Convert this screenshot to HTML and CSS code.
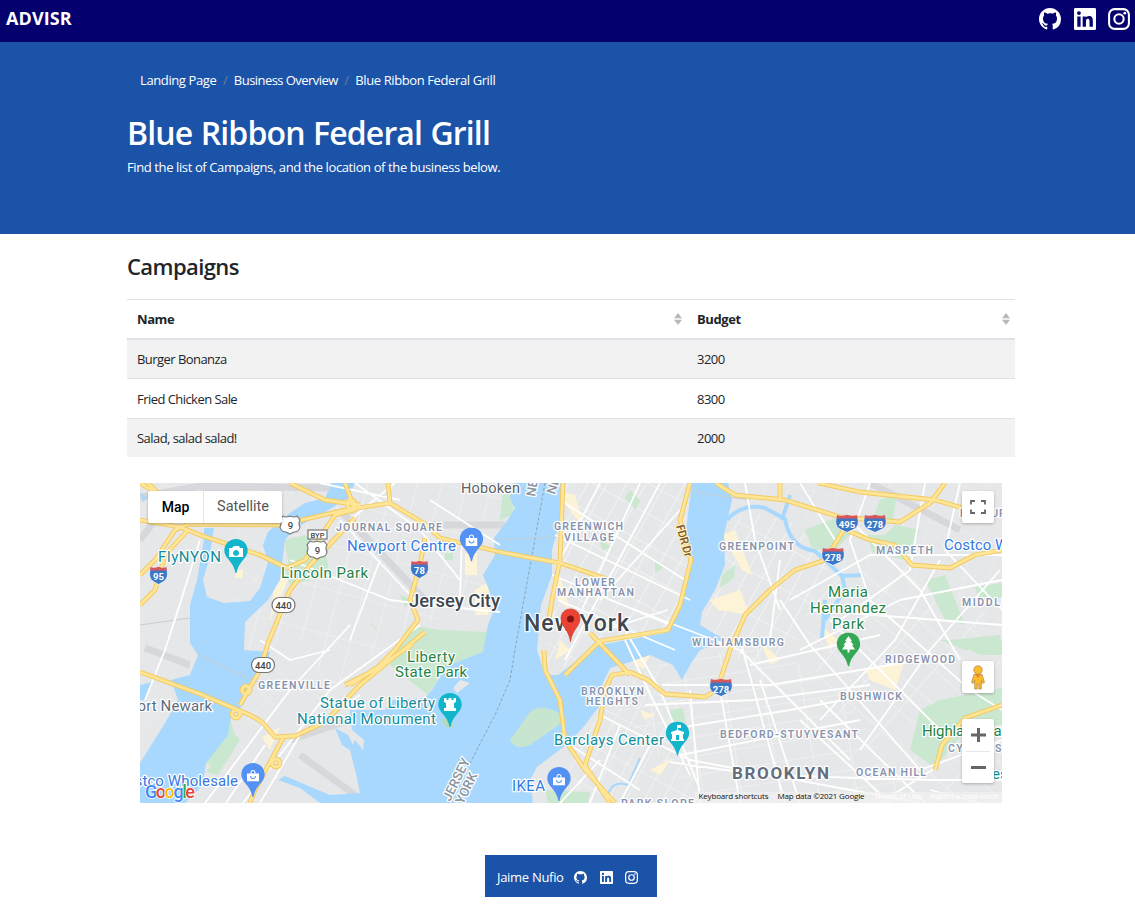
FILE: index.html
```html
<!DOCTYPE html>
<html lang="en">
<head>
<meta charset="utf-8">
<title>ADVISR</title>
<link rel="stylesheet" href="styles.css">
</head>
<body>
<svg class="defs" width="0" height="0" aria-hidden="true">
  <symbol id="github" viewBox="0 0 16 16"><path d="M8 0C3.58 0 0 3.58 0 8c0 3.54 2.29 6.53 5.47 7.59.4.07.55-.17.55-.38 0-.19-.01-.82-.01-1.49-2.01.37-2.53-.49-2.69-.94-.09-.23-.48-.94-.82-1.13-.28-.15-.68-.52-.01-.53.63-.01 1.08.58 1.23.82.72 1.21 1.87.87 2.33.66.07-.52.28-.87.51-1.07-1.78-.2-3.64-.89-3.64-3.95 0-.87.31-1.59.82-2.15-.08-.2-.36-1.02.08-2.12 0 0 .67-.21 2.2.82A7.7 7.7 0 0 1 8 3.87c.68 0 1.36.09 2 .27 1.53-1.04 2.2-.82 2.2-.82.44 1.1.16 1.92.08 2.12.51.56.82 1.27.82 2.15 0 3.07-1.87 3.75-3.65 3.95.29.25.54.73.54 1.48 0 1.07-.01 1.93-.01 2.2 0 .21.15.46.55.38A8.01 8.01 0 0 0 16 8c0-4.42-3.58-8-8-8z"/></symbol>
  <symbol id="linkedin" viewBox="0 0 16 16"><path fill-rule="evenodd" d="M1 0h14a1 1 0 0 1 1 1v14a1 1 0 0 1-1 1H1a1 1 0 0 1-1-1V1a1 1 0 0 1 1-1zm1.400 6.100v7.500h2.400V6.100zM3.600 2.300a1.400 1.400 0 1 0 0 2.800 1.400 1.400 0 0 0 0-2.800zM6.300 6.100v7.500h2.400V9.800c0-1 .3-1.900 1.400-1.900s1.200 1 1.200 2v3.700h2.400V9.400c0-2-.5-3.500-2.900-3.500-1.100 0-1.900.6-2.200 1.200V6.100z"/></symbol>
  <symbol id="instagram" viewBox="0 0 16 16"><rect x=".8" y=".8" width="14.400" height="14.400" rx="4" fill="none" stroke="currentColor" stroke-width="1.500"/><circle cx="8" cy="8" r="3.400" fill="none" stroke="currentColor" stroke-width="1.500"/><circle cx="12.200" cy="3.800" r="1"/></symbol>
  <symbol id="sort" viewBox="0 0 8 12"><path d="M0 5.200 4 0l4 5.200zM0 6.800h8L4 12z"/></symbol>
</svg>

<header class="topbar">
  <a class="brand">ADVISR</a>
  <nav class="social">
    <svg><use href="#github"/></svg>
    <svg><use href="#linkedin"/></svg>
    <svg><use href="#instagram"/></svg>
  </nav>
</header>

<section class="hero">
  <div class="container">
    <nav class="breadcrumb"><a>Landing Page</a><i>/</i><a class="tight">Business Overview</a><i>/</i><span>Blue Ribbon Federal Grill</span></nav>
    <h1>Blue Ribbon Federal Grill</h1>
    <p>Find the list of Campaigns, and the location of the business below.</p>
  </div>
</section>

<main class="container">
  <h2>Campaigns</h2>
  <table class="campaigns">
    <thead><tr>
      <th class="name"><div>Name<svg><use href="#sort"/></svg></div></th>
      <th><div>Budget<svg><use href="#sort"/></svg></div></th>
    </tr></thead>
    <tbody>
      <tr><td>Burger Bonanza</td><td>3200</td></tr>
      <tr><td>Fried Chicken Sale</td><td>8300</td></tr>
      <tr class="last"><td>Salad, salad salad!</td><td>2000</td></tr>
    </tbody>
  </table>

  <div class="map">
    <svg class="tiles" viewBox="140 483 862 320">
      <defs>
        <pattern id="g1" width="17" height="27" patternUnits="userSpaceOnUse" patternTransform="rotate(29)"><path d="M0 0H17M0 0V27" class="street"/></pattern>
        <pattern id="g2" width="16" height="38" patternUnits="userSpaceOnUse" patternTransform="rotate(28)"><path d="M0 0H16M0 0V38" class="street"/></pattern>
        <pattern id="g3" width="38" height="19" patternUnits="userSpaceOnUse" patternTransform="rotate(-9)"><path d="M0 0H38M0 0V19" class="street"/></pattern>
        <pattern id="g4" width="44" height="27" patternUnits="userSpaceOnUse" patternTransform="rotate(41)"><path d="M0 0H44M0 0V27" class="street"/></pattern>
        <pattern id="g5" width="24" height="44" patternUnits="userSpaceOnUse" patternTransform="rotate(15)"><path d="M0 0H24M0 0V44" class="street"/></pattern>
        <symbol id="pin" viewBox="0 0 24 34" preserveAspectRatio="none"><path d="M12 0C5.400 0 .3 5 .3 11.500c0 8 9.200 10.500 11.200 22.500h1c2-12 11.200-14.500 11.200-22.500C23.700 5 18.600 0 12 0z"/></symbol>
        <symbol id="bag" viewBox="0 0 12 12"><path fill="#fff" fill-rule="evenodd" d="M0 4h3.500V3a2.500 2.500 0 0 1 5 0v1H12v8H0zm4.600 0h2.800V3a1.400 1.400 0 0 0-2.800 0zM3 6.500a3 3 0 0 0 6 0H8a2 2 0 0 1-4 0z"/></symbol>
        <symbol id="interstate" viewBox="0 0 24 19" preserveAspectRatio="none"><path d="M2 1.500Q6 3 12 1 18 3 22 1.500 26 12 18.500 15.500L12 18.500 5.500 15.500Q-2 12 2 1.500z" fill="#3c78c8" stroke="#fff" stroke-width=".8"/><path d="M2 1Q6 2.500 12 .8 18 2.500 22 1L22.700 4.500H1.300z" fill="#d8575b"/></symbol>
        <symbol id="us" viewBox="0 0 22 20"><path d="M4 1q3 2 7 0 4 2 7 0l3 4q-2 3 0 7-1 5-6 5l-4 2-4-2q-5 0-6-5 2-4 0-7z" fill="#fff" stroke="#777" stroke-width="1.200"/></symbol>
      </defs>
      <rect x="140" y="483" width="862" height="320" fill="#e6e7e8"/>

      <!-- local street grids -->
      <path fill="url(#g5)" opacity=".7" d="M290 483H512L507 521 494 540 488 590 493 610 410 625 330 690 300 640 245 650 270 580 290 540z"/>
      <path fill="url(#g4)" opacity=".4" d="M140 483H330L280 520 265 600 250 640H200L190 600 205 520 140 540z"/>
      <path fill="url(#g1)" d="M562 483H692L685 525 692 560 680 620 665 635 600 640 560 670 545 660 552 600z"/>
      <path fill="url(#g2)" d="M725 540 745 510 790 520 830 560 800 640 760 665 710 650 705 620z"/>
      <path fill="url(#g3)" opacity=".8" d="M660 660 760 645 830 680 920 803H700L610 700z"/>
      <path fill="url(#g2)" opacity=".8" d="M605 690 665 665 705 803H540L570 745z"/>
      <path fill="url(#g4)" opacity=".8" d="M800 590 900 560 1002 620V803H920L820 690z"/>
      <path fill="url(#g5)" opacity=".35" d="M740 483H1002V640L830 590 820 535z"/>
      <path fill="url(#g4)" opacity=".3" d="M275 650 350 620 390 660 350 700 280 803H205L230 725z"/>

      <!-- industrial strips -->
      <g class="yard"><path d="M140 497 200 486 330 488M140 540 170 500 240 488M430 525H505M145 648 190 665M290 740 350 720M300 755 355 795M340 510 425 600M870 483 960 530"/></g>

      <!-- parks -->
      <g class="park">
        <path d="M284 540 305 535 325 548 330 575 290 572zM283 565 300 560 310 580 290 585zM410 625 440 630 487 632 483 655 447 666 428 695 390 665zM227 725 234 732 225 745 206 772 218 775 240 740z"/>
        <path d="M230 717 235 736 218 768 205 763zM722 575 735 565 734 578 720 588zM805 530 835 518 850 535 833 552 812 548zM880 500 897 492 893 520 870 525zM868 535 885 535 895 525 920 530 905 560 872 552z"/>
        <path d="M925 580 945 575 955 600 965 625 945 620zM975 587 1002 583V598L978 597zM920 710 940 700 1002 688V725L970 725 935 768 910 750zM940 640 1002 640V650H965zM670 710 683 708 686 723 670 720zM545 790 590 792 588 803H548zM500 520 512 515 515 498 503 490zM950 640 1000 635 1002 655 980 655z"/>
        <path d="M630 490 640 500 636 510 625 498zM655 560 665 566 655 573zM600 540 613 548 602 550zM692 483 698 490 690 498zM445 553h8v7h-8zM370 620 380 635 372 625zM400 595 413 600 405 607z"/>
      </g>

      <!-- commercial blocks -->
      <g class="shop"><path d="M722 535 735 530 752 575 742 570zM710 600 740 590 750 615 718 610zM465 553h12v22h-12zM475 590 492 580 488 615 475 615zM555 490 575 495 585 530 570 510zM555 560 570 610 558 600zM820 625 838 640 830 650zM865 670 905 660 895 690 870 680zM275 580 290 575 280 600 270 620zM235 570h8v8h-8zM262 737 280 727 270 750zM630 657 650 655 643 670zM640 710 655 715 645 720zM560 640 570 650 555 660zM760 640 780 660 770 665zM650 770 672 758 660 775z"/></g>

      <!-- water -->
      <g class="water">
        <path d="M332 483H355L348 498 322 514 295 528 285 540 280 580 268 600 245 622 244 650 270 652 268 660 243 705 231 717 228 735 206 763 203 785 185 803H140V763L165 723 178 700 171 680 190 675 198 655 190 643V605L197 580 204 540V528H214L209 560 203 580 207 597 224 603 250 601 260 588 268 562 263 545 268 532 287 515 305 503 325 498z"/>
        <path d="M140 685 152 682 145 700H140zM140 492 147 498 143 502z"/>
        <path d="M513 483H563L560 520 552 550 552 575 541 605 537 650 545 675 558 675 574 663 600 645 665 633 680 610 691 560 686 530 692 483H728L732 500 724 535 725 565 715 590 702 612 700 625 725 640 700 650 690 665 682 680 673 665 650 655 630 662 610 668 602 685 600 705 585 725 570 742 537 767 530 780 533 803H320L300 788 278 780 285 776 330 795 360 793 357 778 350 750 355 740 363 750 364 740 352 730 350 710 385 710 393 700 425 698 432 690 447 666 483 652 488 625 494 610 489 590 483 575 495 555 494 538 507 521 515 508 510 498z"/>
        <path d="M335 728 348 735 358 755 342 745z"/>
      </g>
      <path class="creek" d="M727 520Q742 503 765 508L785 519Q790 548 815 551L842 576 862 575M842 576 845 590 825 620M790 495 782 520M825 600 822 638"/>
      <path class="creek thin" d="M608 795Q612 780 628 785L640 758"/>
      <path fill="#c8e6cf" d="M510 740 530 712Q540 704 555 711T553 729L530 745Q515 751 510 740z"/>
      <path fill="#e7e8ea" d="M453 688 460 680 470 683 457 693zM140 741 162 722 158 700 150 690 140 715z"/>
      <path fill="#b6d9bd" d="M441 720 451 716 454 727 447 728z"/>
      <path d="M545 483 532 555 515 650 510 680 495 715 470 763 448 803" class="border"/>
      <path d="M140 625 190 618M198 655 275 690M490 540 560 537M692 492 750 500" class="rail"/>

      <!-- secondary streets -->
      <g class="avenue">
        <path d="M200 540 178 610 165 650 145 700M290 560 340 580 390 600 430 605 500 612M355 483 420 530 460 580M320 483 400 500M430 500 500 545M260 640 290 660 330 650M243 803 330 690 420 625M205 803 290 690 350 625M226 803 265 745M260 803 300 735 360 695M340 520 415 600M380 560 350 640M395 483 350 520M462 535 460 600"/>
        <path d="M600 483 560 560M640 483 575 625M680 510 600 600M660 483 565 660M560 500 685 580M555 535 690 600M552 575 670 625M558 600 675 650M610 600 740 650 780 690 850 760M625 630 660 690 700 790M605 630 668 610M625 640 648 690 690 775M662 685H770L920 660M645 705 755 700 870 685M665 730 790 710 870 695M680 755 860 720M670 762 760 775 930 780M600 715 690 760 920 803M570 745 640 790M600 760 560 803M620 725 590 803M650 745 620 803M690 690 700 803M720 690 740 803M760 680 800 803M740 640 785 803M780 600 810 645 850 690 920 770M830 620 950 740M870 600 970 690 1002 710M800 650 900 600 1002 580M810 610 1002 625M850 520 920 590 960 660M925 483 910 570 840 620M780 560 770 640M745 483 755 540 780 610M800 483 835 540M960 483 945 550 1002 610M870 483 850 540 870 600M940 560 895 640 820 720M1000 570 930 650 860 750M820 700 925 803M800 720 890 803M790 600 870 555 1002 555M920 770 1002 740M920 780H1002M930 790 980 803M880 803 935 768M750 665 880 635"/>
      </g>

      <!-- arterials -->
      <defs>
        <path id="hw" d="M140 575 155 560 175 530 188 524 280 525 345 510 390 503 425 524 440 538 500 552 560 563 610 580M188 524 165 500 148 483M140 520 180 527 200 535 260 555 287 568M140 605 155 590 165 555 188 530M287 568 305 560 335 515 355 510 345 483M290 483 325 500 360 505M355 518 310 565 290 590 268 643 260 670 240 705M140 672 200 694 250 715 262 722 275 737 295 736 325 722 360 685 425 632M425 538 420 565 410 600 418 620 395 650 375 670 345 685M283 738 255 790 250 803M140 483 160 495M390 503 388 483M412 645 350 685M563 483 560 560 552 600 548 625M690 483 680 520 691 560 680 605 668 630 600 641 565 675M716 483 735 495 785 500 840 517 900 522 930 503 945 483M848 523 825 560 795 570 770 590 745 615 730 650 717 690 705 697 665 694 648 680 630 672 612 675 605 690 600 720 585 765 610 803M544 650 545 670 560 700 565 740 585 770 615 803M846 530 870 540 895 545 912 565 950 568 975 555 1002 550M590 633 630 675M780 500 780 483M818 483 860 492 935 500 970 510 1002 513M935 770 942 745 965 718 1002 705M242 690a4 4 0 1 0 8 0 4 4 0 1 0-8 0M232 714a4 4 0 1 0 8 0 4 4 0 1 0-8 0M272 763a4 4 0 1 0 8 0 4 4 0 1 0-8 0M347 504a4 4 0 1 0 8 0 4 4 0 1 0-8 0"/>
      </defs>
      <use href="#hw" class="case"/><use href="#hw" class="gold"/>

      <!-- shields -->
      <g class="shields">
        <use href="#interstate" x="149" y="566" width="19" height="19"/><text x="158.500" y="579.500">95</text>
        <use href="#interstate" x="410" y="560" width="19" height="19"/><text x="419.500" y="574">78</text>
        <use href="#interstate" x="835" y="514" width="24" height="19"/><text x="847" y="528">495</text>
        <use href="#interstate" x="863" y="514" width="24" height="19"/><text x="875" y="528">278</text>
        <use href="#interstate" x="821" y="547" width="24" height="19"/><text x="833" y="560.500">278</text>
        <use href="#interstate" x="709" y="678" width="24" height="19"/><text x="721" y="692.500">278</text>
      </g>
      <g class="routes">
        <use href="#us" x="279" y="515" width="22" height="20"/><text x="290.500" y="529">9</text>
        <use href="#us" x="306" y="540" width="22" height="20"/><text x="317.500" y="554">9</text>
        <rect x="308" y="530" width="19" height="9"/><text x="317.500" y="537.500" class="byp">BYP</text>
        <rect x="272" y="597.500" width="23" height="15" rx="7.500"/><text x="283.500" y="608.500">440</text>
        <rect x="251.500" y="657.500" width="23" height="15" rx="7.500"/><text x="263" y="668.500">440</text>
      </g>

      <!-- labels -->
      <g class="label area">
        <text x="336" y="531" textLength="106">JOURNAL SQUARE</text>
        <text x="554" y="530" textLength="69">GREENWICH</text><text x="564" y="540.500" textLength="50">VILLAGE</text>
        <text x="575" y="586" textLength="40">LOWER</text><text x="557" y="596" textLength="77">MANHATTAN</text>
        <text x="719" y="549.500" textLength="75">GREENPOINT</text>
        <text x="876" y="554" textLength="57">MASPETH</text>
        <text x="962" y="606" textLength="102">MIDDLE VILLAGE</text>
        <text x="960" y="517" textLength="60">ELMHURST</text>
        <text x="692" y="646" textLength="92">WILLIAMSBURG</text>
        <text x="885" y="663" textLength="70">RIDGEWOOD</text>
        <text x="840" y="700" textLength="62">BUSHWICK</text>
        <text x="258" y="689" textLength="72">GREENVILLE</text>
        <text x="581" y="694.500" textLength="63">BROOKLYN</text><text x="586" y="705" textLength="52">HEIGHTS</text>
        <text x="720" y="738" textLength="138">BEDFORD-STUYVESANT</text>
        <text x="856" y="776" textLength="70">OCEAN HILL</text>
        <text x="948" y="752" textLength="92">CYPRESS HILLS</text>
        <text x="621" y="807" textLength="73">PARK SLOPE</text>
      </g>
      <g class="label green">
        <text x="281" y="577.500" textLength="87">Lincoln Park</text>
        <text x="407" y="661.500" textLength="48">Liberty</text><text x="395" y="677" textLength="72">State Park</text>
        <text x="828" y="597" textLength="40">Maria</text><text x="810" y="612.500" textLength="76">Hernandez</text><text x="832" y="628.500" textLength="32">Park</text>
        <text x="922" y="736" textLength="92">Highland Park</text>
      </g>
      <g class="label teal">
        <text x="158" y="562" textLength="63">FlyNYON</text>
        <text x="320" y="708" textLength="115">Statue of Liberty</text><text x="297" y="724" textLength="139">National Monument</text>
        <text x="554" y="744.500" textLength="110">Barclays Center</text>
        <text x="992" y="779">es</text>
      </g>
      <g class="label blue">
        <text x="347" y="551" textLength="109">Newport Centre</text>
        <text x="944" y="550" textLength="120">Costco Wholesale</text>
        <text x="116" y="786" textLength="122">Costco Wholesale</text>
        <text x="512" y="791" textLength="33">IKEA</text>
      </g>
      <g class="label city">
        <text x="409" y="607" textLength="91" class="mid">Jersey City</text>
        <text x="461" y="492.500" textLength="59" class="small">Hoboken</text>
        <text x="524" y="631" textLength="105" class="big">New York</text>
        <text x="128" y="711" textLength="84" class="port">Port Newark</text>
        <text x="732" y="779" textLength="97" class="borough">BROOKLYN</text>
      </g>
      <g class="label state">
        <text transform="translate(450 802) rotate(-64)">JERSEY</text>
        <text transform="translate(463 805) rotate(-64)">YORK</text>
        <text transform="translate(535 497) rotate(-80)">NEW</text>
        <text transform="translate(555 495) rotate(-73)">NEW</text>
      </g>
      <text class="fdr" transform="translate(676 526) rotate(74)" textLength="33">FDR Dr</text>

      <!-- place pins -->
      <use href="#pin" x="224" y="539" width="24" height="34" fill="#12b5cb"/><path fill="#fff" fill-rule="evenodd" d="M229 548h3l2-2h5l1 2h3v9h-14zm7 2a3 3 0 1 0 .1 0z"/>
      <use href="#pin" x="438" y="693" width="24" height="34" fill="#12b5cb"/><path fill="#fff" d="M444 698h2.500v2h2v-2h3v2h2v-2h2.500v4l-2 1v5h2v3h-12v-3h2v-5l-2-1z"/>
      <use href="#pin" x="665.500" y="721.500" width="24" height="34" fill="#12b5cb"/><path fill="#fff" fill-rule="evenodd" d="M677 725h4v3h-3v2l6 2v2h-1v5h1v2h-13v-2h1v-5h-1v-2l6-2zm-1 10v5h3v-5z"/>
      <use href="#pin" x="459.500" y="527.500" width="24" height="34" fill="#5491f5"/><use href="#bag" x="465.500" y="534" width="12" height="12"/>
      <use href="#pin" x="241" y="763" width="24" height="34" fill="#5491f5"/><use href="#bag" x="247" y="769.500" width="12" height="12"/>
      <use href="#pin" x="547" y="767" width="24" height="34" fill="#5491f5"/><use href="#bag" x="553" y="773.500" width="12" height="12"/>
      <use href="#pin" x="836.500" y="632.500" width="24" height="34" fill="#34a853"/><path fill="#fff" d="m848.500 636 3.500 5h-1.500l3 4H852l3 4.500h-5.500v3h-2v-3H842l3-4.500h-1.500l3-4H845z"/>
      <path d="M570.500 609C565 609 561 613 561 618.500c0 8 8 11 9.500 23 1.500-12 9.500-15 9.500-23 0-5.500-4-9.500-9.500-9.500z" fill="#ea4335" stroke="#cc3a2d" stroke-width=".7"/><circle cx="570.500" cy="619" r="3.500" fill="#811411"/>

      <!-- attribution -->
      <rect x="695" y="792" width="307" height="11" fill="#f0f0f0" opacity=".75"/>
      <g class="legal">
        <text x="698.500" y="799" textLength="70">Keyboard shortcuts</text><text x="777.500" y="799" textLength="87">Map data ©2021 Google</text>
        <g class="faint"><text x="874" y="799" textLength="48">Terms of Use</text><text x="930" y="799" textLength="68">Report a map error</text></g>
      </g>
      <text class="google" x="145" y="797.500" textLength="50"><tspan fill="#4285f4">G</tspan><tspan fill="#ea4335">o</tspan><tspan fill="#fbbc04">o</tspan><tspan fill="#4285f4">g</tspan><tspan fill="#34a853">l</tspan><tspan fill="#ea4335">e</tspan></text>
    </svg>
    <div class="controls">
      <div class="types"><b>Map</b><span>Satellite</span></div>
      <div class="side">
        <div class="btn"><svg width="16" height="14" viewBox="0 0 16 14" fill="none" stroke="#666" stroke-width="1.800"><path fill="none" d="M1 4.500V1h4M11 1h4v3.500M15 9.500V13h-4M5 13H1V9.500"/></svg></div>
        <div class="btn person"><svg width="16" height="25" viewBox="0 0 16 25"><g fill="#fbbc2c" stroke="#b98b4c" stroke-width=".8"><path d="M4 9.500h8l2.500 8-2 .8-1.200-3V24H8.800v-5H7.200v5H4.700v-8.700l-1.200 3-2-.8z"/><circle cx="8" cy="5" r="4.200"/></g><path d="M5 9.500h6l-3 3z" fill="#e8832a"/></svg></div>
        <div class="zoom"><svg viewBox="0 0 32 32"><path d="M9 16h15M16.500 9v14"/></svg><svg viewBox="0 0 32 32"><path d="M9 16.500h15"/></svg></div>
      </div>
    </div>
  </div>
</main>

<footer class="author"><span>Jaime Nufio</span><svg><use href="#github"/></svg><svg><use href="#linkedin"/></svg><svg><use href="#instagram"/></svg></footer>
</body>
</html>
```
FILE: styles.css
```css
* { box-sizing: border-box; }
body { margin: 0; background: #fff; color: #212529; font: 13px/20px "Segoe UI", "Open Sans", "Noto Sans", sans-serif; letter-spacing: -.39px; overflow: hidden; }
.defs { position: absolute; }
svg { fill: currentColor; }
.topbar { height: 42px; padding: 0 5px 0 6px; display: flex; justify-content: space-between; align-items: flex-start; background: #04006d; color: #fff; }
.brand { font-size: 18px; font-weight: 700; line-height: 36px; letter-spacing: .1px; }
.social { display: flex; gap: 12.500px; padding-top: 8px; }
.social svg { width: 22px; height: 22px; }
.container { width: 888px; margin-left: 127px; }
.hero { height: 192px; padding-top: 28px; background: #1b53a8; color: #fff; }
.breadcrumb { display: flex; padding-left: 13px; height: 20px; white-space: nowrap; }
.breadcrumb .tight { letter-spacing: -.55px; }
.breadcrumb i { width: 17.500px; text-align: center; font-style: normal; color: #6c7d95; }
h1 { margin: 22px 0 0; font-size: 32px; line-height: 42px; font-weight: 600; letter-spacing: -.87px; word-spacing: 1px; white-space: nowrap; }
.hero p { margin: 3px 0 0; white-space: nowrap; }
h2 { margin: 18px 0 18px; font-size: 22px; line-height: 29px; font-weight: 600; letter-spacing: -.6px; }
.campaigns { width: 100%; table-layout: fixed; border-collapse: separate; border-spacing: 0; letter-spacing: -.55px; }
.campaigns th { height: 41px; padding: 0 5px 0 10px; border-top: 1px solid #dee2e6; border-bottom: 2px solid #dee2e6; text-align: left; font-weight: 700; letter-spacing: -.4px; }
.campaigns .name { width: 560px; }
.campaigns th div { display: flex; justify-content: space-between; align-items: center; }
.campaigns th svg { width: 8px; height: 12px; color: #b8b8b8; }
.campaigns td { height: 39px; padding: 0 10px; border-bottom: 1px solid #dee2e6; }
.campaigns tbody tr:nth-child(2) td { height: 40px; }
.campaigns tbody tr:nth-child(odd) { background: #f2f2f2; }
.campaigns .last td { height: 38px; border: 0; }
.map { display: grid; width: 862px; height: 320px; margin: 26px 0 0 13px; overflow: hidden; letter-spacing: 0; font-family: Roboto, sans-serif; }
.map > * { grid-area: 1 / 1; }
.tiles { width: 862px; height: 320px; }
.street { fill: none; stroke: #fff; stroke-width: 1.200; opacity: .8; }
.yard { fill: none; stroke: #d6d8db; stroke-width: 7; }
.park { fill: #cae7d0; }
.shop { fill: #fdf3d7; }
.water { fill: #a8d8fd; }
.creek { fill: none; stroke: #a8d8fd; stroke-width: 4; stroke-linejoin: round; }
.creek.thin { stroke-width: 2; }
.border { fill: none; stroke: #8ba3b5; stroke-width: 1; stroke-dasharray: 3 2; }
.rail { fill: none; stroke: #c5ced5; stroke-width: 1; }
.avenue { fill: none; stroke: #fff; stroke-width: 1.800; stroke-linejoin: round; }
.case, .gold { fill: none; stroke-linejoin: round; stroke: #f3ca62; stroke-width: 4.800; }
.gold { stroke: #ffe596; stroke-width: 2.800; }
.shields { fill: #fff; font: 700 9.500px Roboto, sans-serif; text-anchor: middle; }
.routes { fill: #444; font: 500 9.500px Roboto, sans-serif; text-anchor: middle; }
.routes rect { fill: #fff; stroke: #777; stroke-width: 1.200; }
.routes .byp { font-size: 7.500px; }
.label { font: 400 15px Roboto, sans-serif; stroke: #fff; stroke-width: 2.500px; stroke-linejoin: round; paint-order: stroke; }
.area { fill: #8793ad; font-size: 10.500px; font-weight: 600; }
.green { fill: #1f8443; }
.teal { fill: #128c9a; }
.blue { fill: #3478e2; }
.city { fill: #41474f; }
.mid { font-size: 18.500px; font-weight: 500; }
.small { font-size: 14.500px; fill: #5b6168; }
.big { font-size: 23px; font-weight: 500; }
.port { font-size: 15px; fill: #5c6d80; }
.borough { font-size: 17px; font-weight: 700; fill: #626d7d; }
.state { fill: #8995a0; font-size: 13px; font-weight: 500; }
.fdr { fill: #805a2f; font: 500 11.500px Roboto, sans-serif; stroke: #fff2c2; stroke-width: 2px; paint-order: stroke; }
.legal { fill: #111; font: 400 8px "Open Sans", sans-serif; }
.faint { fill: #fff; }
.google { font: 500 18px Roboto, sans-serif; stroke: #fff; stroke-width: 1.500px; paint-order: stroke; }
.controls { z-index: 1; display: flex; justify-content: space-between; align-items: flex-start; padding: 8px; }
.types { display: flex; width: 134px; height: 32px; background: #fff; border-radius: 2px; box-shadow: 0 1px 3px #0004; font-size: 14.500px; line-height: 32px; text-align: center; }
.types b { width: 56px; border-right: 1px solid #e6e6e6; font-size: 14px; font-weight: 500; color: #000; }
.types span { flex: 1; color: #565656; }
.side { display: flex; flex-direction: column; }
.btn, .zoom { width: 32px; background: #fff; border-radius: 2px; box-shadow: 0 1px 3px #0004; }
.btn { height: 32px; display: flex; align-items: center; justify-content: center; }
.person { margin: 138px 0 26px; }
.zoom { height: 64px; display: flex; flex-direction: column; background: linear-gradient(#e6e6e6, #e6e6e6) center / 24px 1px no-repeat #fff; }
.zoom svg { width: 32px; height: 32px; stroke: #666; stroke-width: 3; }
.author { width: 172px; height: 42px; margin: 52px 0 0 485px; padding: 2px 12px 0; display: flex; align-items: center; background: #1b53a8; color: #fff; letter-spacing: -.3px; }
.author span { flex: none; width: 77px; }
.author svg { flex: none; width: 13px; height: 13px; margin-right: 12.500px; }
```
